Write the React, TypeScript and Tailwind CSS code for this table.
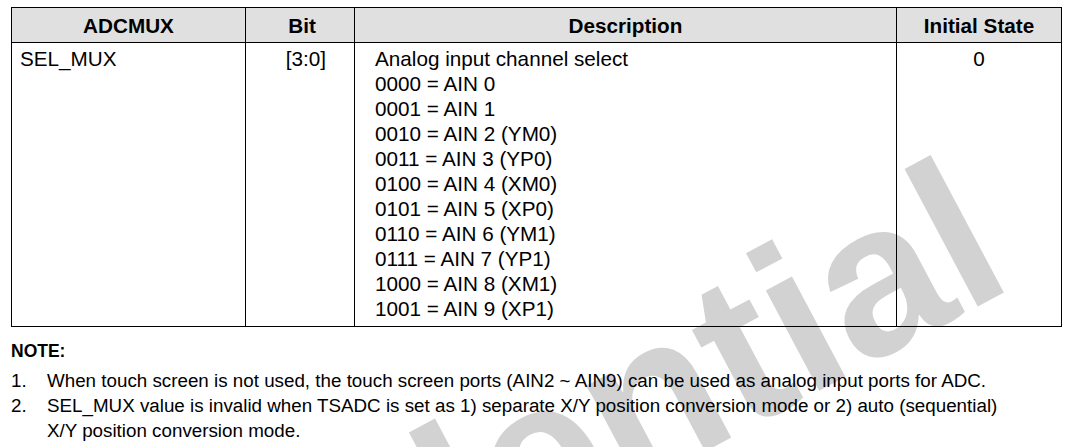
const font = { fontFamily: '"Liberation Sans", Arial, sans-serif' }

const codes = [
  "0000 = AIN 0",
  "0001 = AIN 1",
  "0010 = AIN 2 (YM0)",
  "0011 = AIN 3 (YP0)",
  "0100 = AIN 4 (XM0)",
  "0101 = AIN 5 (XP0)",
  "0110 = AIN 6 (YM1)",
  "0111 = AIN 7 (YP1)",
  "1000 = AIN 8 (XM1)",
  "1001 = AIN 9 (XP1)",
]

const notes = [
  "When touch screen is not used, the touch screen ports (AIN2 ~ AIN9) can be used as analog input ports for ADC.",
  "SEL_MUX value is invalid when TSADC is set as 1) separate X/Y position conversion mode or 2) auto (sequential) X/Y position conversion mode.",
]

export default function App() {
  return (
    <div className="relative h-[447px] w-[1074px] overflow-hidden bg-white text-black" style={font}>
      {/* watermark */}
      <div className="pointer-events-none absolute left-[-165px] top-[708px] origin-top-left -rotate-[28deg] select-none whitespace-nowrap text-[215px] font-bold leading-none text-[#d2d2d2]">
        Confidential
      </div>

      <div className="relative pl-[11px] pt-[7px]">
        <div className="grid w-[1051px] grid-cols-[234px_109px_542px_164px] border border-black text-[20.7px] leading-[25px]">
          <div className="flex h-[35px] items-center justify-center border-b border-r border-black bg-[#e0e0e0] font-bold">ADCMUX</div>
          <div className="flex h-[35px] items-center justify-center border-b border-r border-black bg-[#e0e0e0] pl-[4px] font-bold">Bit</div>
          <div className="flex h-[35px] items-center justify-center border-b border-r border-black bg-[#e0e0e0] font-bold">Description</div>
          <div className="flex h-[35px] items-center justify-center border-b border-black bg-[#e0e0e0] font-bold">Initial State</div>

          <div className="border-r border-black pb-[5px] pl-[8px] pt-[3px]">SEL_MUX</div>
          <div className="border-r border-black pb-[5px] pl-[12px] pt-[3px] text-center">[3:0]</div>
          <div className="border-r border-black pb-[5px] pl-[20px] pt-[3px]">
            <div>Analog input channel select</div>
            {codes.map((c) => (
              <div key={c}>{c}</div>
            ))}
          </div>
          <div className="pb-[5px] pt-[3px] text-center">0</div>
        </div>

        <div className="mt-[13px] text-[17.5px] font-bold leading-[23px]">NOTE:</div>
        <div className="mt-[5px] text-[18.8px] leading-[25px]">
          {notes.map((n, i) => (
            <div key={i} className="flex">
              <div className="w-[36px] shrink-0">{i + 1}.</div>
              <div className="w-[975px]">{n}</div>
            </div>
          ))}
        </div>
      </div>
    </div>
  )
}
